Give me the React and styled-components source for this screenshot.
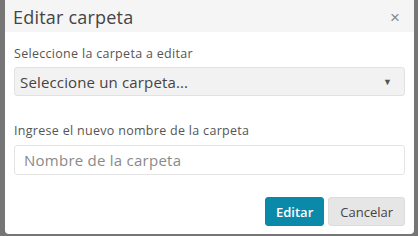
import React from 'react';
import styled, { createGlobalStyle } from 'styled-components';

const GlobalStyle = createGlobalStyle`
	html, body {
		margin: 0;
		padding: 0;
		background: #767676;
		font-family: 'Open Sans', 'Liberation Sans', sans-serif;
	}
`;

const Backdrop = styled.div`
	display: flex;
	justify-content: center;
	align-items: flex-start;
	width: 418px;
	height: 236px;
	overflow: hidden;
	background: #767676;
	padding-left: 1px;
	box-sizing: border-box;
`;

const Modal = styled.div`
	display: flex;
	flex-direction: column;
	width: 409px;
	background: #fff;
	border-radius: 0 0 4px 4px;
	overflow: hidden;
`;

const Header = styled.div`
	display: flex;
	flex-shrink: 0;
	align-items: center;
	justify-content: space-between;
	height: 32px;
	padding: 2px 14px 0 8px;
	box-sizing: border-box;
	background: #f5f5f5;
`;

const Title = styled.h2`
	margin: 0;
	font-size: 18px;
	font-weight: 400;
	color: #444;
	letter-spacing: 0.2px;
`;

const Close = styled.button`
	border: none;
	background: none;
	padding: 0;
	color: #8a8a8a;
	font-size: 17px;
	line-height: 1;
	cursor: pointer;
`;

const Body = styled.div`
	display: flex;
	flex-direction: column;
	padding: 14px 9px 0 9px;
`;

const Label = styled.label`
	font-size: 12.5px;
	line-height: 16px;
	letter-spacing: 0.3px;
	color: #555;
	margin-top: ${(p) => p.$mt || 0}px;
	margin-bottom: ${(p) => p.$mb || 8}px;
`;

const Select = styled.div`
	display: flex;
	align-items: center;
	justify-content: space-between;
	height: 29px;
	padding: 0 12px 0 5px;
	box-sizing: border-box;
	background: #f2f2f2;
	border: 1px solid #e2e2e2;
	border-radius: 3px;
	font-size: 15px;
	letter-spacing: 0.15px;
	color: #444;
`;

const Arrow = styled.span`
	font-size: 9px;
	color: #555;
`;

const Input = styled.input`
	height: 30px;
	padding: 0 9px;
	box-sizing: border-box;
	border: 1px solid #e4e4e4;
	border-radius: 3px;
	font-family: inherit;
	font-size: 15px;
	letter-spacing: 0.25px;
	color: #444;
	outline: none;

	&::placeholder {
		color: #8a8a8a;
	}
`;

const Footer = styled.div`
	display: flex;
	justify-content: flex-end;
	gap: 4px;
	padding: 22px 9px 8px;
`;

const Button = styled.button`
	height: 29px;
	padding: 0 ${(p) => (p.$primary ? 10 : 11)}px;
	border: 1px solid ${(p) => (p.$primary ? '#0a86a6' : '#dcdcdc')};
	border-radius: 3px;
	background: ${(p) => (p.$primary ? '#0b89a9' : '#e6e6e6')};
	color: ${(p) => (p.$primary ? '#fff' : '#444')};
	font-family: inherit;
	font-size: 13px;
	font-weight: ${(p) => (p.$primary ? 600 : 400)};
	cursor: pointer;
`;

const App = () => {
	return (
		<>
			<GlobalStyle />
			<Backdrop>
				<Modal>
					<Header>
						<Title>Editar carpeta</Title>
						<Close>×</Close>
					</Header>
					<Body>
						<Label $mb={5}>Seleccione la carpeta a editar</Label>
						<Select>
							<span>Seleccione un carpeta...</span>
							<Arrow>▼</Arrow>
						</Select>
						<Label $mt={27} $mb={6}>
							Ingrese el nuevo nombre de la carpeta
						</Label>
						<Input placeholder='Nombre de la carpeta' />
					</Body>
					<Footer>
						<Button $primary>Editar</Button>
						<Button>Cancelar</Button>
					</Footer>
				</Modal>
			</Backdrop>
		</>
	);
};

export default App;
